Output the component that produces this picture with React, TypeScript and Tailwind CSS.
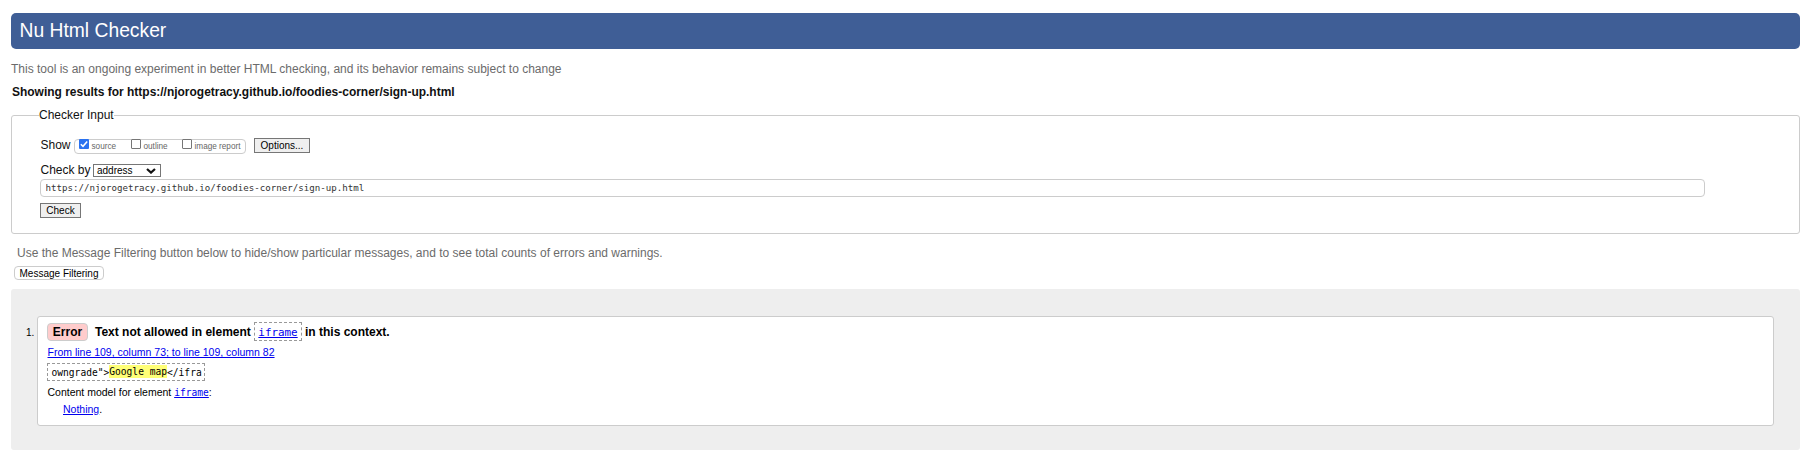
import type { ReactNode } from "react";

function CheckOption({ label, checked = false, className }: { label: string; checked?: boolean; className: string }) {
  return (
    <label className={`flex h-[13px] items-start text-[8.2px] leading-[11px] text-[#666] ${className}`}>
      {checked ? (
        <span className="-mt-px flex h-[10px] w-[10px] shrink-0 rounded-[1px] bg-[#2a72f0]">
          <svg viewBox="0 0 10 10" className="h-[10px] w-[10px]" fill="none" stroke="#fff" strokeWidth="1.5">
            <path d="M1.8 5.2 L4 7.3 L8.2 2.4" />
          </svg>
        </span>
      ) : (
        <span className="-mt-px h-[10px] w-[10px] shrink-0 rounded-[1px] border border-[#767676] bg-white" />
      )}
      <span className="mt-px ml-[2.5px] whitespace-nowrap">{label}</span>
    </label>
  );
}

function Button({ children, className }: { children: ReactNode; className: string }) {
  return (
    <button
      type="button"
      className={`h-[15px] shrink-0 border border-[#767676] bg-[#efefef] text-center text-[10px] leading-[13px] text-black ${className}`}
    >
      {children}
    </button>
  );
}

export default function App() {
  return (
    <main className="h-[457px] overflow-hidden bg-white pt-[13px] pr-[13px] pl-[11px] font-['Liberation_Sans',Arial,sans-serif] text-[12px] leading-4 whitespace-nowrap text-[#111]">
      <h1 className="h-9 rounded-[5px] bg-[#3f5e96] pl-[8.5px] text-[19.3px] leading-[35px] text-white">Nu Html Checker</h1>
      <p className="mt-3 text-[#6b6b6b]">
        This tool is an ongoing experiment in better HTML checking, and its behavior remains subject to change
      </p>
      <h2 className="mt-[7px] pl-px text-[11.97px] font-bold">
        Showing results for https://njorogetracy.github.io/foodies-corner/sign-up.html
      </h2>

      <fieldset className="mt-[7px] h-[127px] rounded-[3px] border border-[#ccc] pl-7">
        <legend className="-ml-px">Checker Input</legend>
        <div className="mt-[14px] flex h-[17px] items-start">
          <span className="w-[34px] pl-[0.5px]">Show</span>
          <div className="mt-[2px] flex h-[15px] w-[172px] rounded-[4px] border border-[#ccc] pl-1">
            <CheckOption label="source" checked className="w-[52px]" />
            <CheckOption label="outline" className="w-[51px]" />
            <CheckOption label="image report" className="" />
          </div>
          <Button className="mt-px ml-2 w-14">Options...</Button>
        </div>
        <div className="mt-2 flex h-[17px] items-start">
          <span className="w-[53px] pl-[0.5px]">Check by</span>
          <div className="mt-[2px] flex h-[13px] w-[68px] items-center justify-between border border-[#767676] bg-white pr-1 pl-[3px] text-[10px] leading-[11px] text-black">
            <span>address</span>
            <svg viewBox="0 0 10 6" className="h-[6px] w-[10px]" fill="none" stroke="#111" strokeWidth="2.2">
              <path d="M1 1 L5 4.6 L9 1" />
            </svg>
          </div>
        </div>
        <input
          type="text"
          defaultValue="https://njorogetracy.github.io/foodies-corner/sign-up.html"
          className="block h-[18px] w-[1665px] rounded-[4px] border border-[#ccc] px-[4.5px] font-['DejaVu_Sans_Mono',monospace] text-[9.13px] leading-4 text-[#333]"
        />
        <Button className="mt-[6px] block w-[41px]">Check</Button>
      </fieldset>

      <p className="mt-[11px] pl-[6px] text-[#6b6b6b]">
        Use the Message Filtering button below to hide/show particular messages, and to see total counts of errors and
        warnings.
      </p>
      <button
        type="button"
        className="mt-[5px] ml-[3px] block h-[14px] w-[90px] rounded-[4px] border border-[#ccc] bg-white text-center text-[10px] leading-[13px] text-black"
      >
        Message Filtering
      </button>

      <section className="mt-[9px] flex h-[161px] rounded-[3px] bg-[#eee] pt-[27px] pr-[26px]">
        <span className="mt-[9px] w-[26px] pl-[15px] text-[10px] leading-4 text-black">1.</span>
        <div className="h-[110px] grow rounded-[3px] border border-[#ccc] bg-white pt-[5px] pl-[9px] text-[10.5px] text-black">
          <div className="flex h-5 items-start text-[12px] font-bold">
            <span className="mt-px h-[18px] w-[41px] rounded-[4px] border border-[#ccc] bg-[#fcc] text-center leading-4">
              Error
            </span>
            <span className="mt-[2px] ml-[7px] w-[159px]">Text not allowed in element</span>
            <code className="h-[19px] w-12 border border-dashed border-[#999] text-center font-['DejaVu_Sans_Mono',monospace] text-[10.9px] leading-[19px] font-normal text-[#00e] underline">
              iframe
            </code>
            <span className="mt-[2px] ml-[3px]">in this context.</span>
          </div>
          <div className="mt-[2px] ml-[0.5px] h-4 text-[#00e] underline">
            From line 109, column 73; to line 109, column 82
          </div>
          <div className="mt-[3px] h-[18px] w-[158px] border border-dashed border-[#999] pl-[3.5px] font-['DejaVu_Sans_Mono',monospace] text-[9.6px] leading-[17px]">
            <code className="flex font-['DejaVu_Sans_Mono',monospace]">
              <span>owngrade"&gt;</span>
              <span className="mt-px h-[13px] bg-[#ff7] leading-[13px]">Google map</span>
              <span>&lt;/ifra</span>
            </code>
          </div>
          <div className="mt-[3px] ml-[0.5px] h-4">
            Content model for element{" "}
            <code className="font-['DejaVu_Sans_Mono',monospace] text-[9.6px] text-[#00e] underline">iframe</code>:
          </div>
          <div className="mt-px h-4 pl-4">
            <span className="text-[#00e] underline">Nothing</span>.
          </div>
        </div>
      </section>
    </main>
  );
}
